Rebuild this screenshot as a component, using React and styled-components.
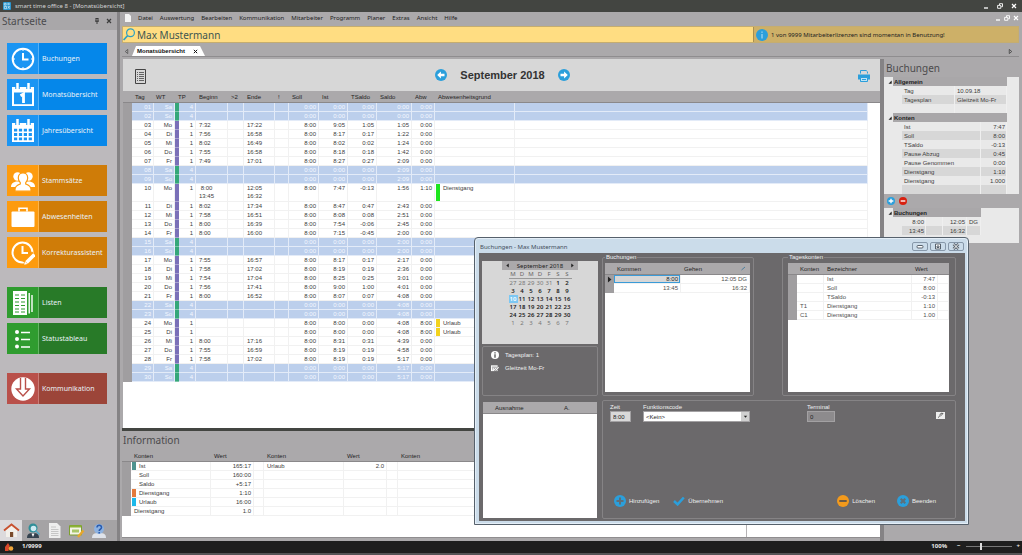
import React from "react";
import styled, { createGlobalStyle, css } from "styled-components";

const Global = createGlobalStyle`
  *, *::before, *::after { box-sizing: border-box; }
  body { margin: 0; background: #aba9ab; }
  button, input, select { font: inherit; color: inherit; margin: 0; padding: 0; border: 0; background: none; border-radius: 0; }
  button { cursor: pointer; }
  svg { display: block; flex: none; }
  table { border-collapse: separate; border-spacing: 0; table-layout: fixed; }
  th { font-weight: 400; text-align: left; }
`;

const ui = `"Noto Sans", "Open Sans", sans-serif`;
const small = `"Liberation Sans", Arial, sans-serif`;

const Shell = styled.div`
  position: relative;
  display: flex;
  flex-direction: column;
  min-height: 100vh;
  font: 6px/8px ${small};
  color: #3c3c3c;
`;

/* ---------- window frame ---------- */
const TitleBar = styled.header`
  display: flex;
  align-items: center;
  gap: 4px;
  height: 12px;
  padding: 0 5px 0 3px;
  background: #434541;
  color: #d4d4d4;
  font: 6px/8px ${ui};
`;
const WindowControls = styled.div`
  display: flex;
  gap: ${(p) => p.$gap}px;
  margin-left: auto;
  color: #fff;
`;
const IconButton = styled.button`
  display: flex;
  align-items: center;
  justify-content: center;
`;
const Columns = styled.div`
  display: flex;
  flex: 1;
`;
const StatusBar = styled.footer`
  display: flex;
  align-items: center;
  height: 14px;
  padding: 0 2px 2px 4px;
  background: #1e1e1e;
  border-bottom: 2px solid #555355;
  color: #e8e8e8;
  font: bold 6px/8px ${ui};
`;
const StatusCount = styled.span`
  margin-left: 8px;
`;
const Zoom = styled.label`
  display: flex;
  align-items: center;
  gap: 10px;
  margin-left: auto;
`;
const ZoomRange = styled.input`
  appearance: none;
  width: 46px;
  height: 8px;
  background: linear-gradient(#777, #777) center / 100% 1px no-repeat;
  &::-webkit-slider-thumb { appearance: none; width: 2px; height: 7px; background: #ddd; }
`;
const ZoomScale = styled.span`
  display: flex;
  align-items: center;
  gap: 5px;
`;

/* ---------- sidebar ---------- */
const Sidebar = styled.aside`
  display: flex;
  flex-direction: column;
  flex: none;
  width: 120px;
  background: #bcb9bc;
  border-right: 3px solid #858385;
`;
const SidebarHead = styled.div`
  display: flex;
  align-items: center;
  gap: 7px;
  height: 18px;
  padding: 0 5px 0 2px;
  background: #a9a7a9;
`;
const PaneTitle = styled.h2`
  margin: 0 auto 0 0;
  font: 10px/14px ${ui};
  color: #4b4b4d;
`;
const Nav = styled.nav`
  display: flex;
  flex-direction: column;
  gap: 19px;
  padding: 13px 10px 0 7px;
`;
const NavGroup = styled.div`
  display: flex;
  flex-direction: column;
  gap: 5px;
`;
const NavButton = styled.button`
  display: flex;
  align-items: center;
  height: 31px;
  background: ${(p) => p.$bg};
  color: #e9f1f6;
  font: 7px/10px ${ui};
  white-space: nowrap;
`;
const NavIcon = styled.span`
  display: flex;
  flex: none;
  align-items: center;
  justify-content: center;
  width: 32px;
  height: 31px;
  margin-right: 3px;
  background: ${(p) => p.$bg};
  border-right: 1px solid rgba(255, 255, 255, 0.25);
`;
const SideTabs = styled.div`
  display: flex;
  height: 21px;
  margin-top: auto;
  background: #a5a3a5;
`;
const SideTab = styled.button`
  display: flex;
  align-items: center;
  justify-content: center;
  width: 22px;
  height: 21px;
  background: ${(p) => (p.$active ? "#dcdadc" : "none")};
`;

/* ---------- main area ---------- */
const Main = styled.main`
  display: flex;
  flex: 1;
  flex-direction: column;
  min-width: 0;
  padding: 0 3px 0 2px;
  background: #aba9ab;
`;
const MenuBar = styled.nav`
  display: flex;
  align-items: center;
  gap: 7px;
  height: 14px;
  padding: 0 0 2px 3px;
  color: #222;
  font: 6px/8px ${ui};
`;
const MenuItem = styled.button`
  white-space: nowrap;
`;
const SearchRow = styled.div`
  display: flex;
  height: 17px;
  border: 1px solid #c5ad70;
`;
const Person = styled.div`
  display: flex;
  flex: 1;
  align-items: center;
  gap: 2px;
  background: #ffdd82;
  color: #3d5550;
  font: 10px/14px ${ui};
`;
const License = styled.div`
  display: flex;
  align-items: center;
  gap: 3px;
  width: 265px;
  padding-left: 2px;
  background: #cdb068;
  border-left: 1px solid #a99050;
  color: #222;
  font: 6px/8px ${ui};
`;
const TabRow = styled.div`
  display: flex;
  align-items: flex-end;
  gap: 3px;
  height: 14px;
  padding: 0 6px 0 2px;
  border-bottom: 1px solid #8f8d8f;
`;
const Tab = styled.div`
  display: flex;
  align-items: center;
  gap: 8px;
  height: 10px;
  padding: 0 7px 0 5px;
  background: #fff;
  clip-path: polygon(0 100%, 4px 0, calc(100% - 5px) 0, 100% 100%);
  color: #111;
  font: bold 6px/8px ${small};
`;
const TabArrow = styled(IconButton)`
  height: 10px;
  margin-left: ${(p) => (p.$end ? "auto" : "0")};
`;
const Workspace = styled.div`
  display: flex;
  flex: 1;
  padding-top: 2px;
`;
const Center = styled.div`
  display: flex;
  flex: 1;
  flex-direction: column;
  min-width: 0;
`;
const MonthPanel = styled.section`
  flex: 1;
  margin-left: 1px;
  background: #fff;
`;
const MonthBar = styled.div`
  display: grid;
  grid-template-columns: 1fr auto 1fr;
  align-items: center;
  height: 32px;
  padding: 0 10px 0 12px;
  background: #d7d7d7;
`;
const MonthNav = styled.div`
  display: flex;
  align-items: center;
  gap: 13px;
`;
const MonthTitle = styled.h1`
  margin: 0;
  font: bold 11px/14px "Liberation Sans", Arial, sans-serif;
  color: #333;
`;
const ListButton = styled(IconButton)`
  justify-self: start;
  padding-top: 3px;
`;
const PrintButton = styled(IconButton)`
  justify-self: end;
  padding-top: 2px;
`;
const Splitter = styled.div`
  height: 3px;
  margin-right: 1px;
  background: #434541;
`;
const InfoPanel = styled.section`
  height: 110px;
`;
const InfoHead = styled.div`
  height: 19px;
  padding: 2px 1px;
`;
const InfoBody = styled.div`
  display: flex;
  height: 88px;
  background: #fff;
  border-bottom: 1px solid #8f8d8f;
`;
const InfoMain = styled.div`
  flex: 1;
  min-width: 0;
`;
const InfoSide = styled.div`
  width: 134px;
  border-left: 1px solid #b5b3b5;
`;

/* ---------- grids ---------- */
const Grid = styled.table`
  width: 100%;
  background: #fff;
`;
const HeadCell = styled.th`
  height: 12px;
  padding: 0 0 0 ${(p) => (p.$pad ?? 3)}px;
  background: #aba9ab;
  border-bottom: 1px solid #8a888a;
  color: #1f1f1f;
  line-height: 8px;
  white-space: nowrap;
`;
const SortHead = styled.span`
  display: flex;
  align-items: center;
  justify-content: space-between;
  padding-right: 4px;
`;
const Cell = styled.td`
  padding: 0 2px 0 ${(p) => p.$pad ?? 3}px;
  border-right: 1px solid #f1f1f1;
  border-bottom: 1px solid #f1f1f1;
  line-height: 8px;
  vertical-align: top;
  white-space: pre;
  text-align: ${(p) => (p.$right ? "right" : "left")};
  ${(p) => p.$weekend && css`
    background: #bccfec;
    border-color: #e3ebf8;
    color: #f4f8ff;
  `}
`;
const Gutter = styled.td`
  height: 9px;
  padding: 0;
  background: #a09ea0;
`;
const Stripe = styled.td`
  padding: 0;
  background: ${(p) => p.$color};
  border-bottom: 1px solid rgba(255, 255, 255, 0.35);
`;
const Blank = styled.td`
  padding: 0;
  background: #fff;
`;
const DayRow = styled.tr`
  height: ${(p) => (p.$double ? 18 : 9)}px;
`;
const Mark = styled.span`
  display: flex;
  gap: 3px;
  height: ${(p) => (p.$double ? 17 : 8)}px;
  &::before { content: ""; width: 4px; background: ${(p) => p.$color}; }
`;

/* ---------- right panel ---------- */
const SidePanel = styled.aside`
  width: 139px;
  flex: none;
  border-left: 4px solid #858385;
`;
const SideHead = styled.div`
  height: 18px;
  padding: 2px;
`;
const PropertyBox = styled.div`
  height: ${(p) => p.$h}px;
  padding-left: 3px;
  background: #e9e9e9;
`;
const PropertyTable = styled.table`
  width: ${(p) => p.$w}px;
`;
const PropTitle = styled.th`
  height: 9px;
  padding: 0 0 0 1px;
  background: #a9a7a9;
  color: #222;
  font-weight: 700;
  line-height: 8px;
`;
const PropCell = styled.td`
  height: 9px;
  padding: 0 1px 0 2px;
  border-right: 1px solid #efefef;
  background: ${(p) => (p.$alt ? "#d7d7d7" : "#e9e9e9")};
  text-align: ${(p) => (p.$right ? "right" : "left")};
  white-space: nowrap;
`;
const Expander = styled.td`
  padding: 0 0 0 1px;
`;
const Actions = styled.div`
  display: flex;
  align-items: center;
  gap: 4px;
  height: 14px;
  padding-left: 3px;
`;

/* ---------- dialog ---------- */
const Dialog = styled.section`
  position: absolute;
  top: 237px;
  left: 474px;
  width: 495px;
  padding: 0 3px 3px 4px;
  background: #cbdcea;
  border: 1px solid #56616c;
  border-radius: 4px 4px 0 0;
  box-shadow: inset 0 0 0 1px #e4eef7;
`;
const DialogTitle = styled.header`
  display: flex;
  align-items: center;
  height: 15px;
  padding: 2px 1px 0;
  color: #3f4c5a;
  font: 6px/8px ${ui};
`;
const DialogControls = styled.div`
  display: flex;
  gap: 2px;
  margin-left: auto;
`;
const FrameButton = styled(IconButton)`
  width: 16px;
  height: 9px;
  border: 1px solid #8798aa;
  border-radius: 2px;
  color: #56616c;
`;
const DialogBody = styled.div`
  display: grid;
  grid-template-columns: 116px 1fr;
  gap: 4px;
  height: 268px;
  padding: 0 9px 2px 3px;
  background: #6b696b;
  color: #f0f0f0;
`;
const LeftStack = styled.div`
  display: flex;
  flex-direction: column;
  gap: 2px;
  padding-top: 8px;
`;
const RightStack = styled.div`
  display: flex;
  flex-direction: column;
  gap: 4px;
`;
const Groups = styled.div`
  display: flex;
  justify-content: space-between;
`;
const Calendar = styled.div`
  display: flex;
  flex-direction: column;
  align-items: center;
  height: 83px;
  background: #d7d7d7;
  color: #222;
  font: 6px/8px ${ui};
`;
const CalendarHead = styled.div`
  display: flex;
  align-items: center;
  justify-content: space-between;
  width: 76px;
  height: 9px;
  padding: 0 3px;
  background: #aba9ab;
`;
const CalendarTable = styled.table`
  width: 63px;
  th, td { padding: 0; height: 8px; text-align: center; line-height: 8px; }
  th { height: 9px; color: #666; border-bottom: 1px solid #999; }
`;
const Day = styled.td`
  color: ${(p) => (p.$selected ? "#fff" : p.$out ? "#777" : "#222")};
  background: ${(p) => (p.$selected ? "#7cc7f2" : "none")};
  font-weight: ${(p) => (p.$out ? 400 : 600)};
`;
const PlanBox = styled.div`
  display: flex;
  flex-direction: column;
  gap: 4px;
  height: 50px;
  margin-bottom: 4px;
  padding: 3px 8px;
  border: 1px solid #858385;
  border-radius: 2px;
`;
const PlanLine = styled.div`
  display: flex;
  align-items: center;
  gap: 6px;
  height: 9px;
`;
const ListBox = styled.div`
  flex: 1;
  margin: 0 1px 1px;
  background: #fff;
  color: #444;
`;
const Group = styled.fieldset`
  width: ${(p) => p.$w}px;
  min-width: 0;
  height: 143px;
  margin: 0;
  padding: 2px ${(p) => p.$pr}px 3px ${(p) => p.$pl}px;
  border: 1px solid #858385;
  border-radius: 2px;
`;
const Legend = styled.legend`
  height: 8px;
  padding: 0 1px;
`;
const GroupBody = styled.div`
  height: 129px;
  background: #fff;
  color: #505050;
`;
const PickedCell = styled(Cell)`
  background: #d7d7d7;
  box-shadow: inset 0 0 0 1px #3a9bd8;
  color: #222;
`;
const FormBox = styled.form`
  display: flex;
  flex: 1;
  flex-direction: column;
  justify-content: space-between;
  padding: 2px 10px 11px 7px;
  border: 1px solid #858385;
  border-radius: 2px;
`;
const FieldRow = styled.div`
  display: flex;
  align-items: flex-end;
`;
const Field = styled.label`
  display: flex;
  flex-direction: column;
  width: ${(p) => p.$w}px;
  margin-right: ${(p) => p.$mr || 0}px;
`;
const TextInput = styled.input`
  width: 100%;
  height: 11px;
  padding: 0 2px;
  background: ${(p) => (p.$muted ? "#8d8b8d" : "#d9d9d9")};
  border: 1px solid #a3a1a3;
  color: #222;
`;
const SelectWrap = styled.span`
  position: relative;
  display: block;
`;
const Select = styled.select`
  appearance: none;
  display: block;
  width: 100%;
  height: 11px;
  padding: 0 2px;
  background: #fff;
  border: 1px solid #a3a1a3;
  color: #222;
`;
const SelectArrow = styled.span`
  position: absolute;
  top: 1px;
  right: 1px;
  display: flex;
  align-items: center;
  justify-content: center;
  width: 8px;
  height: 9px;
  background: #d0d0d0;
  pointer-events: none;
`;
const EditButton = styled(IconButton)`
  margin: 0 0 3px auto;
`;
const ButtonRow = styled.div`
  display: flex;
  gap: ${(p) => p.$gap}px;
`;
const FormActions = styled.div`
  display: flex;
  justify-content: space-between;
  padding: 0 9px 0 4px;
`;
const ActionButton = styled.button`
  display: flex;
  align-items: center;
  gap: 3px;
`;

/* ---------- icons ---------- */
const NavSvg = ({ children }) => (
  <svg width="24" height="24" viewBox="0 0 24 24" fill="none" stroke="#fff" strokeWidth="2">{children}</svg>
);
const icons = {
  clock: <NavSvg><circle cx="12" cy="12" r="10.3" /><path d="M12 6v6.5h5.5" /><path d="M12 2v2M12 20v2M2 12h2M20 12h2" strokeWidth="1" /></NavSvg>,
  day: <NavSvg><path d="M1 4h22v19H1z" fill="#fff" stroke="none" /><path d="M3 9.5h18v11.7H3z" fill="#1b95f3" stroke="none" /><path d="M6.500 0v6M17.500 0v6" stroke="#1b95f3" strokeWidth="4.500" /><path d="M6.500 0v6M17.500 0v6" strokeWidth="2.500" /><path d="M9.500 12.700l3-1.700v9" strokeWidth="2.800" /></NavSvg>,
  year: <NavSvg><path d="M1 4h22v19H1z" fill="#fff" stroke="none" /><path d="M6.500 0v6M17.500 0v6" stroke="#1b95f3" strokeWidth="4.500" /><path d="M6.500 0v6M17.500 0v6" strokeWidth="2.500" /><path d="M3 11.200h18M3 15.500h18M3 19.800h18" stroke="#1b95f3" strokeWidth="2.800" strokeDasharray="3.200 1.700" /></NavSvg>,
  people: <NavSvg><g fill="#fff" stroke="none"><circle cx="6.500" cy="7.500" r="4.200" /><circle cx="17.500" cy="7.500" r="4.200" /><path d="M0 18c0-3.500 2-4.500 5-5.500h14c3 1 5 2 5 5.500z" /></g><path d="M12 4c3.200 0 4.700 2.200 4.700 5 0 2.200-1 3.700-2 4.700v1.300c3 1 5.300 2 5.300 5.500v1.700H4V20.500c0-3.500 2.300-4.500 5.300-5.500v-1.300c-1-1-2-2.500-2-4.700 0-2.800 1.500-5 4.700-5z" fill="#fff" stroke="#fd9b0e" strokeWidth="1.200" /></NavSvg>,
  bag: <NavSvg><rect x=".5" y="6.500" width="23" height="15.500" rx="1" fill="#fff" stroke="none" /><path d="M8 6.500V3.200h8v3.300" strokeWidth="1.600" /></NavSvg>,
  edit: <NavSvg><circle cx="11.500" cy="11.500" r="10" /><path d="M11.500 5v7h5.500" /><path d="M14 22.500L23.500 13" stroke="#fd9b0e" strokeWidth="7" /><path d="M15.500 21.500L23.500 13.500" strokeWidth="3.600" /><path d="M13.200 23.800l.8-3.300 2.400 2.400z" fill="#fff" stroke="none" /></NavSvg>,
  lists: <NavSvg><path d="M2 0h14v24H2z" fill="#fff" stroke="none" /><path d="M18.200 2v20.500M21 4v17" strokeWidth="1.400" /><path d="M4 4h4M10 4h4M4 7.500h4M10 7.500h4M4 11h4M10 11h4M4 14.500h4M10 14.500h4M4 18h4M10 18h4M4 21h4M10 21h4" stroke="#2f9c2f" strokeWidth="1.200" /></NavSvg>,
  status: <NavSvg><g fill="#fff" stroke="none"><circle cx="6" cy="5" r="2" /><circle cx="6" cy="12" r="2" /><circle cx="6" cy="19.500" r="2" /></g><path d="M10 5.500h9M10 12.500h9M10 20h9" strokeWidth="1.500" /></NavSvg>,
  down: <NavSvg><circle cx="12" cy="12" r="11.700" fill="#fff" stroke="none" /><path d="M9.500 1v11H5.500l6.500 7 6.500-7h-4V1" stroke="#b9504a" strokeWidth="1.400" /></NavSvg>,
};

const Arrow = ({ flip }) => (
  <svg width="12" height="12" viewBox="0 0 12 12" transform={flip ? "scale(-1 1)" : undefined}>
    <circle cx="6" cy="6" r="6" fill="#2b9fdb" /><path d="M2.200 6l3.700-3.500v2.200h3.600v2.600H5.900v2.200z" fill="#fff" />
  </svg>
);
const RoundIcon = ({ size, color, ink, d, w = 2 }) => (
  <svg width={size} height={size} viewBox="0 0 12 12"><circle cx="6" cy="6" r="6" fill={color} /><path d={d} stroke={ink} strokeWidth={w} fill="none" /></svg>
);
const Triangle = ({ d, size = 5, fill = "#222", outline }) => (
  <svg width={size} height={size} viewBox="0 0 6 6"><path d={d} fill={outline ? "none" : fill} stroke={outline ? fill : "none"} strokeWidth="1" /></svg>
);
const Min = () => <svg width="6" height="6" viewBox="0 0 6 6"><path d="M1 5h4" stroke="currentColor" strokeWidth="1.300" /></svg>;
const Restore = () => <svg width="6" height="6" viewBox="0 0 6 6" fill="none" stroke="currentColor"><path d="M2.500 2V.7h3v3H4.200M.6 2.400h3.200v2.900H.6z" strokeWidth=".9" /></svg>;
const Close = ({ size = 6 }) => <svg width={size} height={size} viewBox="0 0 6 6"><path d="M1 1l4 4M5 1L1 5" stroke="currentColor" strokeWidth="1.200" /></svg>;
const ListGlyph = () => (
  <svg width="11" height="15" viewBox="0 0 11 15" fill="none" stroke="#444">
    <path d="M.5.5h10v14H.5z" />
    <path d="M2 3.500h1M4 3.500h5M2 5.500h1M4 5.500h5M2 7.500h1M4 7.500h5M2 9.500h1M4 9.500h5M2 11.500h1M4 11.500h5" strokeWidth=".8" />
  </svg>
);

/* ---------- data ---------- */
const NAV = [
  { tone: ["#1b95f3", "#0587ea"], items: [["clock", "Buchungen"], ["day", "Monatsübersicht"], ["year", "Jahresübersicht"]] },
  { tone: ["#fd9b0e", "#cf7c08"], items: [["people", "Stammsätze"], ["bag", "Abwesenheiten"], ["edit", "Korrekturassistent"]] },
  { tone: ["#2f9c2f", "#287a28"], items: [["lists", "Listen"], ["status", "Statustableau"]] },
  { tone: ["#b9504a", "#9c4539"], items: [["down", "Kommunikation"]] },
];
const MENU = ["Datei", "Auswertung", "Bearbeiten", "Kommunikation", "Mitarbeiter", "Programm", "Planer", "Extras", "Ansicht", "Hilfe"];
const WEEKEND = ["Sa", "So"];
const DAYS = [
  ["01", "Sa", "", "", "0:00", "0:00", "0:00", "0:00", "0:00"],
  ["02", "So", "", "", "0:00", "0:00", "0:00", "0:00", "0:00"],
  ["03", "Mo", "7:32", "17:22", "8:00", "9:05", "1:05", "1:05", "0:00"],
  ["04", "Di", "7:56", "16:58", "8:00", "8:17", "0:17", "1:22", "0:00"],
  ["05", "Mi", "8:02", "16:49", "8:00", "8:02", "0:02", "1:24", "0:00"],
  ["06", "Do", "7:55", "16:58", "8:00", "8:18", "0:18", "1:42", "0:00"],
  ["07", "Fr", "7:49", "17:01", "8:00", "8:27", "0:27", "2:09", "0:00"],
  ["08", "Sa", "", "", "0:00", "0:00", "0:00", "2:09", "0:00"],
  ["09", "So", "", "", "0:00", "0:00", "0:00", "2:09", "0:00"],
  ["10", "Mo", " 8:00\n13:45", "12:05\n16:32", "8:00", "7:47", "-0:13", "1:56", "1:10", "Dienstgang", "#1ee61e"],
  ["11", "Di", "8:02", "17:34", "8:00", "8:47", "0:47", "2:43", "0:00"],
  ["12", "Mi", "7:58", "16:51", "8:00", "8:08", "0:08", "2:51", "0:00"],
  ["13", "Do", "8:00", "16:39", "8:00", "7:54", "-0:06", "2:45", "0:00"],
  ["14", "Fr", "8:00", "16:00", "8:00", "7:15", "-0:45", "2:00", "0:00"],
  ["15", "Sa", "", "", "0:00", "0:00", "0:00", "2:00", "0:00"],
  ["16", "So", "", "", "0:00", "0:00", "0:00", "2:00", "0:00"],
  ["17", "Mo", "7:55", "16:57", "8:00", "8:17", "0:17", "2:17", "0:00"],
  ["18", "Di", "7:58", "17:02", "8:00", "8:19", "0:19", "2:36", "0:00"],
  ["19", "Mi", "7:54", "17:04", "8:00", "8:25", "0:25", "3:01", "0:00"],
  ["20", "Do", "7:56", "17:41", "8:00", "9:00", "1:00", "4:01", "0:00"],
  ["21", "Fr", "8:00", "16:52", "8:00", "8:07", "0:07", "4:08", "0:00"],
  ["22", "Sa", "", "", "0:00", "0:00", "0:00", "4:08", "0:00"],
  ["23", "So", "", "", "0:00", "0:00", "0:00", "4:08", "0:00"],
  ["24", "Mo", "", "", "8:00", "8:00", "0:00", "4:08", "8:00", "Urlaub", "#f2d21c"],
  ["25", "Di", "", "", "8:00", "8:00", "0:00", "4:08", "8:00", "Urlaub", "#f2d21c"],
  ["26", "Mi", "8:00", "17:16", "8:00", "8:31", "0:31", "4:39", "0:00"],
  ["27", "Do", "7:55", "16:59", "8:00", "8:19", "0:19", "4:58", "0:00"],
  ["28", "Fr", "7:58", "17:02", "8:00", "8:19", "0:19", "5:17", "0:00"],
  ["29", "Sa", "", "", "0:00", "0:00", "0:00", "5:17", "0:00"],
  ["30", "So", "", "", "0:00", "0:00", "0:00", "5:17", "0:00"],
];
const INFO = [
  ["Ist", "165:17", "#4f9490", "Urlaub", "2.0"],
  ["Soll", "160:00", "transparent"],
  ["Saldo", "+5:17", "transparent"],
  ["Dienstgang", "1:10", "#e37a3c"],
  ["Urlaub", "16:00", "#1cb8ea"],
  ["Dienstgang", "1.0"],
];
const KONTEN = [["Ist", "7:47"], ["Soll", "8:00"], ["TSaldo", "-0:13"], ["Pause Abzug", "0:45"], ["Pause Genommen", "0:00"], ["Dienstgang", "1:10"], ["Dienstgang", "1.000"], ["", ""]];
const WEEKS = [
  [27, 28, 29, 30, 31, 1, 2], [3, 4, 5, 6, 7, 8, 9], [10, 11, 12, 13, 14, 15, 16],
  [17, 18, 19, 20, 21, 22, 23], [24, 25, 26, 27, 28, 29, 30], [1, 2, 3, 4, 5, 6, 7],
];
const TAGESKONTEN = [["", "Ist", "7:47"], ["", "Soll", "8:00"], ["", "TSaldo", "-0:13"], ["T1", "Dienstgang", "1:10"], ["C1", "Dienstgang", "1.00"]];

const Cols = ({ widths }) => (
  <colgroup>{widths.map((w, i) => <col key={i} width={w || undefined} />)}</colgroup>
);

function MonthTable() {
  return (
    <Grid>
      <Cols widths={[9, 22, 21, 4, 17, 32, 16, 31, 14, 30, 29, 29, 35, 23, 80, 0, 12]} />
      <thead>
        <tr>
          <HeadCell $pad={0} />
          <HeadCell>Tag</HeadCell>
          <HeadCell $pad={2}>WT</HeadCell>
          <HeadCell colSpan={2}>TP</HeadCell>
          {["Beginn", ">2", "Ende", "!", "Soll", "Ist", "TSaldo", "Saldo", "Abw", "Abwesenheitsgrund", "", ""].map((t, i) => <HeadCell key={i}>{t}</HeadCell>)}
        </tr>
      </thead>
      <tbody>
        {DAYS.map(([day, wd, from, to, soll, ist, ts, saldo, abw, reason, color]) => {
          const we = WEEKEND.includes(wd);
          const double = from.includes("\n");
          const R = (v) => <Cell $weekend={we} $right>{v}</Cell>;
          return (
            <DayRow key={day} $double={double}>
              <Gutter />
              {R(day)}{R(wd)}
              <Stripe $color={we ? "#35a779" : "#7a70b8"} />
              {R(we ? "4" : "1")}
              <Cell $weekend={we}>{from}</Cell>
              <Cell $weekend={we} />
              <Cell $weekend={we}>{to}</Cell>
              <Cell $weekend={we} />
              {R(soll)}{R(ist)}{R(ts)}{R(saldo)}{R(abw)}
              <Cell $weekend={we} $pad={1}>{reason && <Mark $color={color} $double={double}>{reason}</Mark>}</Cell>
              <Cell $weekend={we} />
              <Blank />
            </DayRow>
          );
        })}
      </tbody>
    </Grid>
  );
}

function InfoTable() {
  return (
    <Grid>
      <Cols widths={[9, 80, 43, 10, 80, 43, 11, 80, 0]} />
      <thead>
        <tr>
          <HeadCell />
          {["Konten", "Wert", "", "Konten", "Wert", "", "Konten", "Wert"].map((t, i) => <HeadCell key={i}>{t}</HeadCell>)}
        </tr>
      </thead>
      <tbody>
        {INFO.map(([name, value, color, name2, value2], i) => (
          <tr key={i}>
            <Gutter />
            <Cell $pad={color ? 1 : 3}>{color ? <Mark $color={color}>{name}</Mark> : name}</Cell>
            <Cell $right>{value}</Cell>
            <Cell />
            <Cell>{name2}</Cell>
            <Cell $right>{value2}</Cell>
            <Cell /><Cell /><Cell />
          </tr>
        ))}
      </tbody>
    </Grid>
  );
}

const Twisty = () => <Expander><Triangle d="M5.500.8v4.700H.8z" size={4} /></Expander>;

function BookingPanel() {
  return (
    <SidePanel>
      <SideHead><PaneTitle>Buchungen</PaneTitle></SideHead>
      <PropertyBox $h={117}>
        <PropertyTable $w={120}>
          <Cols widths={[6, 9, 53, 52]} />
          <tbody>
            <tr><Twisty /><PropTitle colSpan={3}>Allgemein</PropTitle></tr>
            <tr><td /><td /><PropCell>Tag</PropCell><PropCell>10.09.18</PropCell></tr>
            <tr><td /><td /><PropCell $alt>Tagesplan</PropCell><PropCell $alt>Gleitzeit Mo-Fr</PropCell></tr>
            <tr><td /><td /><PropCell /><PropCell /></tr>
          </tbody>
        </PropertyTable>
        <PropertyTable $w={120}>
          <Cols widths={[6, 9, 79, 26]} />
          <tbody>
            <tr><Twisty /><PropTitle colSpan={3}>Konten</PropTitle></tr>
            {KONTEN.map(([k, v], i) => (
              <tr key={i}><td /><td /><PropCell $alt={i % 2 === 1}>{k}</PropCell><PropCell $right $alt={i % 2 === 1}>{v}</PropCell></tr>
            ))}
          </tbody>
        </PropertyTable>
      </PropertyBox>
      <Actions>
        <IconButton aria-label="Hinzufügen"><RoundIcon size={8} color="#2b9fdb" ink="#fff" d="M6 2.500v7M2.500 6h7" /></IconButton>
        <IconButton aria-label="Löschen"><RoundIcon size={8} color="#d8200f" ink="#fff" d="M2.500 6h7" /></IconButton>
      </Actions>
      <PropertyBox $h={35}>
        <PropertyTable $w={94}>
          <Cols widths={[6, 9, 24, 17, 24, 14]} />
          <tbody>
            <tr><Twisty /><PropTitle colSpan={5}>Buchungen</PropTitle></tr>
            <tr><td /><td /><PropCell $right>8:00</PropCell><PropCell /><PropCell $right>12:05</PropCell><PropCell>DG</PropCell></tr>
            <tr><td /><td /><PropCell $alt $right>13:45</PropCell><PropCell $alt /><PropCell $alt $right>16:32</PropCell><PropCell $alt /></tr>
          </tbody>
        </PropertyTable>
      </PropertyBox>
    </SidePanel>
  );
}

function CalendarPane() {
  return (
    <Calendar>
      <CalendarHead>
        <IconButton aria-label="Vorheriger Monat"><Triangle d="M4.500.5v5L1.500 3z" /></IconButton>
        September 2018
        <IconButton aria-label="Nächster Monat"><Triangle d="M1.500.5v5L4.500 3z" /></IconButton>
      </CalendarHead>
      <CalendarTable>
        <thead><tr>{["M", "D", "M", "D", "F", "S", "S"].map((d, i) => <th key={i}>{d}</th>)}</tr></thead>
        <tbody>
          {WEEKS.map((week, w) => (
            <tr key={w}>
              {week.map((d) => <Day key={d} $selected={w === 2 && d === 10} $out={(w === 0 && d > 20) || w === 5}>{d}</Day>)}
            </tr>
          ))}
        </tbody>
      </CalendarTable>
    </Calendar>
  );
}

function BookingDialog() {
  return (
    <Dialog role="dialog" aria-label="Buchungen - Max Mustermann">
      <DialogTitle>
        Buchungen - Max Mustermann
        <DialogControls>
          <FrameButton aria-label="Minimieren"><svg width="8" height="5" viewBox="0 0 8 5"><rect x="1" y="1.500" width="6" height="2.500" rx="1" fill="#fff" stroke="currentColor" /></svg></FrameButton>
          <FrameButton aria-label="Maximieren"><svg width="8" height="7" viewBox="0 0 8 7"><path d="M1.500 1h5v5h-5zM3 3h2v1.500H3z" fill="#fff" stroke="currentColor" /></svg></FrameButton>
          <FrameButton aria-label="Schließen"><svg width="8" height="7" viewBox="0 0 8 7"><path d="M1.500 1l5 5M6.500 1l-5 5" stroke="currentColor" strokeWidth="2.600" /><path d="M1.500 1l5 5M6.500 1l-5 5" stroke="#fff" /></svg></FrameButton>
        </DialogControls>
      </DialogTitle>
      <DialogBody>
        <LeftStack>
          <CalendarPane />
          <PlanBox>
            <PlanLine><RoundIcon size={8} color="#fff" ink="#555" d="M6 2v1.700M6 5v5" w={2} />Tagesplan: 1</PlanLine>
            <PlanLine>
              <svg width="8" height="8" viewBox="0 0 9 8"><path d="M0 1h7.500v6.500H0z" fill="#fff" /><path d="M1 3h5.500M1.500 4.500h1M3.500 4.500h1M1.500 6h1" stroke="#6b696b" strokeWidth=".8" /><path d="M4.500 7.500L8.500 3" stroke="#6b696b" strokeWidth="2.400" /><path d="M5 7L8.500 3" stroke="#fff" strokeWidth="1.300" /></svg>
              Gleitzeit Mo-Fr
            </PlanLine>
          </PlanBox>
          <ListBox>
            <Grid>
              <Cols widths={[9, 69, 0]} />
              <thead><tr><HeadCell /><HeadCell>Ausnahme</HeadCell><HeadCell>A.</HeadCell></tr></thead>
            </Grid>
          </ListBox>
        </LeftStack>
        <RightStack>
          <Groups>
            <Group $w={152} $pl={2} $pr={3}>
              <Legend>Buchungen</Legend>
              <GroupBody>
                <Grid>
                  <Cols widths={[9, 67, 0]} />
                  <thead>
                    <tr>
                      <HeadCell />
                      <HeadCell>Kommen</HeadCell>
                      <HeadCell>
                        <SortHead>Gehen<svg width="5" height="5" viewBox="0 0 5 5"><path d="M.5 4l3.500-3" stroke="#4b7fa0" fill="none" /></svg></SortHead>
                      </HeadCell>
                    </tr>
                  </thead>
                  <tbody>
                    <tr><Gutter><Triangle d="M2.500.5v5L5.500 3z" size={7} /></Gutter><PickedCell $right>8:00</PickedCell><Cell $right>12:05 DG</Cell></tr>
                    <tr><Gutter /><Cell $right>13:45</Cell><Cell $right>16:32</Cell></tr>
                  </tbody>
                </Grid>
              </GroupBody>
            </Group>
            <Group $w={174} $pl={5} $pr={6}>
              <Legend>Tageskonten</Legend>
              <GroupBody>
                <Grid>
                  <Cols widths={[9, 27, 88, 26, 0]} />
                  <thead><tr><HeadCell /><HeadCell>Konten</HeadCell><HeadCell>Bezeichner</HeadCell><HeadCell>Wert</HeadCell><HeadCell /></tr></thead>
                  <tbody>
                    {TAGESKONTEN.map(([k, name, v], i) => <tr key={i}><Gutter /><Cell>{k}</Cell><Cell>{name}</Cell><Cell $right>{v}</Cell><Cell /></tr>)}
                  </tbody>
                </Grid>
              </GroupBody>
            </Group>
          </Groups>
          <FormBox onSubmit={(e) => e.preventDefault()}>
            <FieldRow>
              <Field $w={21} $mr={12}>Zeit<TextInput defaultValue="8:00" /></Field>
              <Field $w={107} $mr={57}>
                Funktionscode
                <SelectWrap>
                  <Select defaultValue="k"><option value="k">&lt;Kein&gt;</option></Select>
                  <SelectArrow><Triangle d="M1 2h4L3 4.500z" /></SelectArrow>
                </SelectWrap>
              </Field>
              <Field $w={28}>Terminal<TextInput $muted readOnly value="0" /></Field>
              <EditButton type="button" aria-label="Bearbeiten">
                <svg width="9" height="7" viewBox="0 0 9 7"><path d="M0 0h9v7H0z" fill="#eee" /><path d="M2 5.500l1.500-1M4 4.500L7 1.500 5 1.200 3.500 3.500" stroke="#555" strokeWidth=".9" fill="none" /></svg>
              </EditButton>
            </FieldRow>
            <FormActions>
              <ButtonRow $gap={14}>
                <ActionButton type="button"><RoundIcon size={12} color="#2b9fdb" ink="#5f6f79" d="M6 2.500v7M2.500 6h7" />Hinzufügen</ActionButton>
                <ActionButton type="submit"><svg width="12" height="10" viewBox="0 0 12 10"><path d="M1 5l3.600 3.400L10.800 1.500" fill="none" stroke="#2b9fdb" strokeWidth="2.500" /></svg>Übernehmen</ActionButton>
              </ButtonRow>
              <ButtonRow $gap={22}>
                <ActionButton type="button"><RoundIcon size={12} color="#f39a1c" ink="#6b5a45" d="M2.300 6h7.400" />Löschen</ActionButton>
                <ActionButton type="button"><RoundIcon size={12} color="#2b9fdb" ink="#5f6f79" d="M3.700 3.700l4.600 4.600M8.300 3.700l-4.600 4.600" />Beenden</ActionButton>
              </ButtonRow>
            </FormActions>
          </FormBox>
        </RightStack>
      </DialogBody>
    </Dialog>
  );
}

export default function App() {
  return (
    <Shell>
      <Global />
      <TitleBar>
        <svg width="8" height="8" viewBox="0 0 9 9"><rect width="9" height="9" rx="1" fill="#2a96cf" /><path d="M1.500 1.500h2v2h-2zM5 1.500h2.500M5 3h2.500M1.500 5h2.500v2.500H1.500zM5.500 4.500l2 3M7.500 4.500l-2 3" stroke="#d8eefa" strokeWidth=".8" fill="none" /></svg>
        smart time office 8 - [Monatsübersicht]
        <WindowControls $gap={8}>
          <IconButton aria-label="Minimieren"><Min /></IconButton>
          <IconButton aria-label="Wiederherstellen"><Restore /></IconButton>
          <IconButton aria-label="Schließen"><Close /></IconButton>
        </WindowControls>
      </TitleBar>
      <Columns>
        <Sidebar>
          <SidebarHead>
            <PaneTitle>Startseite</PaneTitle>
            <IconButton aria-label="Anheften"><svg width="4" height="6" viewBox="0 0 4 6"><path d="M1 0v3M3 0v3M.8.400h2.400M0 3.200h4M2 3v3" stroke="#222" strokeWidth=".8" /></svg></IconButton>
            <IconButton aria-label="Schließen"><Close /></IconButton>
          </SidebarHead>
          <Nav>
            {NAV.map(({ tone, items }) => (
              <NavGroup key={tone[0]}>
                {items.map(([icon, label]) => (
                  <NavButton key={label} $bg={tone[1]}><NavIcon $bg={tone[0]}>{icons[icon]}</NavIcon>{label}</NavButton>
                ))}
              </NavGroup>
            ))}
          </Nav>
          <SideTabs>
            <SideTab $active aria-label="Startseite"><svg width="17" height="15" viewBox="0 0 17 15"><path d="M3 7l5.500-5L14 7v7H3z" fill="#f3f0ea" /><path d="M1 7.500L8.500 1.500 16 7.500" fill="none" stroke="#c8512f" strokeWidth="1.800" /><path d="M7 9h3.200v5H7z" fill="#7a4a2a" /></svg></SideTab>
            <SideTab aria-label="Personal"><svg width="15" height="16" viewBox="0 0 15 16"><circle cx="7" cy="5" r="4.500" fill="#2f8f98" /><path d="M1 15c0-4 2-5 6-5s6 1 6 5z" fill="#34424f" /><path d="M5.500 10.500L7 14l1.500-3.500z" fill="#fff" /><circle cx="7.500" cy="5.500" r="2.800" fill="#cfeaf2" /><path d="M9.500 7.500l4 4" stroke="#4fa7c4" strokeWidth="1.500" /></svg></SideTab>
            <SideTab aria-label="Listen"><svg width="12" height="15" viewBox="0 0 12 15"><path d="M0 0h8l3.500 3.500V15H0z" fill="#eeeeee" /><path d="M2 4h5M2 6.500h7.500M2 8.500h7.500M2 10.500h7.500M2 12.500h7.500" stroke="#bbb" strokeWidth=".8" /></svg></SideTab>
            <SideTab aria-label="Planer"><svg width="16" height="14" viewBox="0 0 16 14"><path d="M.5 1.500h12v9.500H.5z" fill="#f4f4e8" stroke="#7da02e" /><path d="M1 2.500h11" stroke="#8db338" strokeWidth="2" /><path d="M3 5.500h7v3H3z" fill="#a9c66a" /><path d="M9 13l5.500-6.500" stroke="#e8a62c" strokeWidth="2.400" /></svg></SideTab>
            <SideTab aria-label="Hilfe"><svg width="14" height="16" viewBox="0 0 14 16"><path d="M0 15c0-4 2-5 7-5s7 1 7 5z" fill="#dfe3ea" /><circle cx="7" cy="6" r="5" fill="#8eb2e0" /><path d="M5 4.500c0-3 4.500-3 4.500 0C9.500 6.500 7.200 6 7.200 8M7.200 9v1.500" fill="none" stroke="#2a5cae" strokeWidth="1.500" /></svg></SideTab>
          </SideTabs>
        </Sidebar>
        <Main>
          <MenuBar>
            <svg width="6" height="8" viewBox="0 0 6 8"><path d="M0 0h4l2 2v6H0z" fill="#f4f4f4" /></svg>
            {MENU.map((m) => <MenuItem key={m}>{m}</MenuItem>)}
            <WindowControls $gap={3}>
              <IconButton aria-label="Fenster minimieren"><Min /></IconButton>
              <IconButton aria-label="Fenster wiederherstellen"><Restore /></IconButton>
              <IconButton aria-label="Fenster schließen"><Close /></IconButton>
            </WindowControls>
          </MenuBar>
          <SearchRow>
            <Person>
              <svg width="12" height="13" viewBox="0 0 12 13"><circle cx="7.500" cy="4.800" r="3.900" fill="none" stroke="#2b9fc4" strokeWidth="1.200" /><path d="M4.500 7.700L.6 12" stroke="#2b9fc4" strokeWidth="1.700" /></svg>
              Max Mustermann
            </Person>
            <License>
              <RoundIcon size={12} color="#2b9fdb" ink="#bfe3f5" d="M6 2.500v1.300M6 5v4.500" w={1} />
              1 von 9999 Mitarbeiterlizenzen sind momentan in Benutzung!
            </License>
          </SearchRow>
          <TabRow>
            <TabArrow aria-label="Zurück"><Triangle d="M4.500.5v5L1.500 3z" fill="#555" outline /></TabArrow>
            <Tab>Monatsübersicht<IconButton aria-label="Tab schließen"><Close size={5} /></IconButton></Tab>
            <TabArrow $end aria-label="Weiter"><Triangle d="M1.500.5v5L4.500 3z" fill="#444" outline /></TabArrow>
          </TabRow>
          <Workspace>
            <Center>
              <MonthPanel>
                <MonthBar>
                  <ListButton aria-label="Liste"><ListGlyph /></ListButton>
                  <MonthNav>
                    <IconButton aria-label="Vorheriger Monat"><Arrow /></IconButton>
                    <MonthTitle>September 2018</MonthTitle>
                    <IconButton aria-label="Nächster Monat"><Arrow flip /></IconButton>
                  </MonthNav>
                  <PrintButton aria-label="Drucken">
                    <svg width="12" height="12" viewBox="0 0 12 12"><path d="M2.500 3.500v-3h5.700l1.300 1.300v1.700" fill="#d7d7d7" stroke="#2b9fdb" /><path d="M0 4.500h12v5H0z" fill="#2b9fdb" /><path d="M2.500 7.500h7v4h-7z" fill="#bfe3f5" stroke="#2b9fdb" /><path d="M4 9.500h4" stroke="#2b9fdb" /></svg>
                  </PrintButton>
                </MonthBar>
                <MonthTable />
              </MonthPanel>
              <Splitter />
              <InfoPanel>
                <InfoHead><PaneTitle>Information</PaneTitle></InfoHead>
                <InfoBody><InfoMain><InfoTable /></InfoMain><InfoSide /></InfoBody>
              </InfoPanel>
            </Center>
            <BookingPanel />
          </Workspace>
        </Main>
      </Columns>
      <StatusBar>
        <svg width="10" height="9" viewBox="0 0 10 9"><path d="M1 9V5l3-4 1.500 2.500L4.500 9z" fill="#d9482b" /><circle cx="7" cy="6.500" r="2.300" fill="#f0a63a" /></svg>
        <StatusCount>1/9999</StatusCount>
        <Zoom>100%
          <ZoomScale>− <ZoomRange type="range" min="50" max="200" defaultValue="100" /> +</ZoomScale>
        </Zoom>
      </StatusBar>
      <BookingDialog />
    </Shell>
  );
}
